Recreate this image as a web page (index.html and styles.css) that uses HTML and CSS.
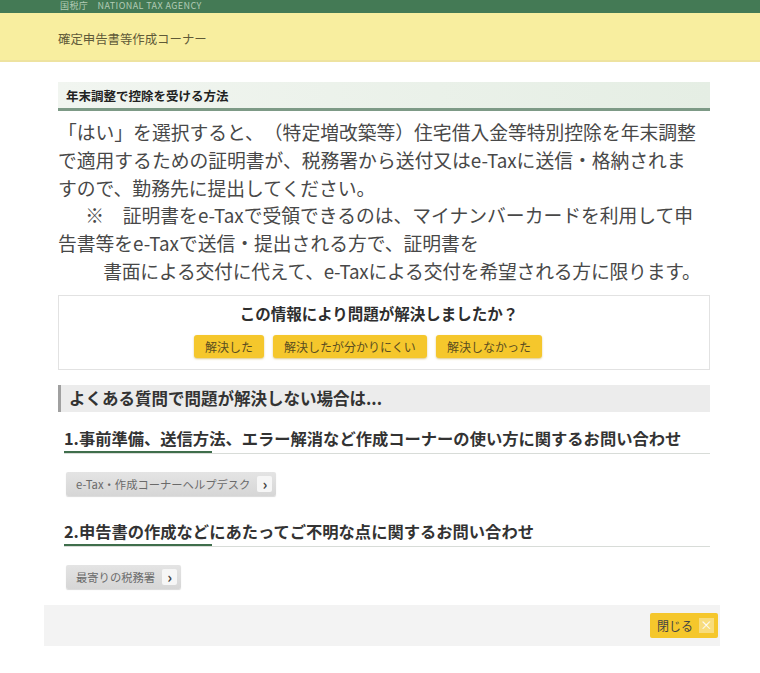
FILE: index.html
```html
<!DOCTYPE html>
<html lang="ja">
<head>
    <meta charset="UTF-8">
    <meta name="viewport" content="width=device-width, initial-scale=1.0">
    <title>確定申告書等作成コーナー</title>
    <link rel="stylesheet" href="styles.css">
</head>
<body>
    <div class="agency-bar">国税庁　NATIONAL TAX AGENCY</div>
    <header class="site-header">確定申告書等作成コーナー</header>

    <div class="modal">
        <div class="modal-body">
            <h2 class="section-title">年末調整で控除を受ける方法</h2>
            <p class="lead">「はい」を選択すると、（特定増改築等）住宅借入金等特別控除を年末調整で適用するための証明書が、税務署から送付又はe-Taxに送信・格納されますので、勤務先に提出してください。<br>　&nbsp;&nbsp;※　証明書をe-Taxで受領できるのは、マイナンバーカードを利用して申告書等をe-Taxで送信・提出される方で、証明書を<br><span class="last-line">　　&nbsp;&nbsp;書面による交付に代えて、e-Taxによる交付を希望される方に限ります。</span></p>

            <div class="feedback">
                <div class="feedback-title">この情報により問題が解決しましたか？</div>
                <div class="feedback-buttons">
                    <button class="btn-yellow">解決した</button>
                    <button class="btn-yellow">解決したが分かりにくい</button>
                    <button class="btn-yellow">解決しなかった</button>
                </div>
            </div>

            <h2 class="faq-title">よくある質問で問題が解決しない場合は...</h2>

            <h3 class="contact-title">1.事前準備、送信方法、エラー解消など作成コーナーの使い方に関するお問い合わせ</h3>
            <button class="btn-link">e-Tax・作成コーナーヘルプデスク<span class="chev">&#x203A;</span></button>

            <h3 class="contact-title">2.申告書の作成などにあたってご不明な点に関するお問い合わせ</h3>
            <button class="btn-link">最寄りの税務署<span class="chev">&#x203A;</span></button>
        </div>

        <div class="modal-footer">
            <button class="btn-close">閉じる<span class="x">×</span></button>
        </div>
    </div>
</body>
</html>
```

FILE: styles.css
```css
body {
    margin: 0;
    background: #fff;
    font-family: "Noto Sans CJK JP", "Noto Sans", sans-serif;
    color: #333;
}

.agency-bar {
    background-color: #447a55;
    color: #b3ccb6;
    font-size: 9px;
    height: 13px;
    line-height: 12px;
    padding-left: 60px;
    letter-spacing: 0.4px;
}

.site-header {
    background-color: #f8ee9f;
    border-bottom: 2px solid #eee3a0;
    height: 47px;
    line-height: 52px;
    padding-left: 58px;
    font-size: 12.4px;
    color: #5f5a38;
}

.modal {
    margin-left: 44px;
    width: 676px;
    margin-top: 20px;
}

.modal-body {
    padding: 0 10px 16px 14px;
}

.section-title {
    margin: 0;
    height: 26px;
    line-height: 27px;
    padding-left: 8px;
    font-size: 12.5px;
    font-weight: bold;
    color: #222;
    background: linear-gradient(to right, #f1f5f0, #e5eee4);
    border-bottom: 3px solid #7d9a86;
}

.lead {
    margin: 7px 0 10px;
    padding-right: 8px;
    font-size: 18.8px;
    line-height: 27.8px;
    color: #484848;
    text-spacing-trim: space-all;
}

.last-line {
    white-space: nowrap;
    letter-spacing: -0.2px;
}

.feedback {
    border: 1px solid #e2e2e2;
    padding: 4px 0 11px;
    text-align: center;
}

.feedback-title {
    font-size: 15.5px;
    font-weight: bold;
    color: #2e2e2e;
    line-height: 26px;
    padding-right: 10px;
}

.feedback-buttons {
    display: flex;
    justify-content: center;
    gap: 9px;
    margin-top: 9px;
    padding-right: 32px;
}

.btn-yellow {
    font-family: inherit;
    background-color: #f5c72c;
    border: none;
    border-radius: 3px;
    height: 23px;
    padding: 0 11px;
    font-size: 12px;
    color: #5a4d20;
    box-shadow: 0 1px 2px rgba(190, 150, 20, 0.5);
}

.faq-title {
    margin: 15px 0 0;
    height: 27px;
    line-height: 27px;
    padding-left: 8px;
    font-size: 16.5px;
    font-weight: bold;
    color: #333;
    background-color: #ececec;
    border-left: 3px solid #a0a0a0;
}

.contact-title {
    margin: 15px 0 0 6px;
    padding-bottom: 4px;
    font-size: 16.3px;
    font-weight: bold;
    color: #333;
    line-height: 22px;
    border-bottom: 1px solid #d8dcd8;
    background: linear-gradient(#3f6e4c, #3f6e4c) no-repeat left bottom / 148px 2px;
}

.btn-link {
    display: flex;
    align-items: center;
    margin: 18px 0 24px 8px;
    height: 24px;
    padding: 0 4px 0 10px;
    font-family: inherit;
    font-size: 11.3px;
    color: #6a6a6a;
    border: none;
    border-radius: 2px;
    background: linear-gradient(#e4e4e4, #d6d6d6);
    box-shadow: 0 1px 1px rgba(0, 0, 0, 0.15);
}

.btn-link:last-child {
    margin-bottom: 0;
}

.chev {
    display: inline-block;
    width: 15px;
    height: 16px;
    line-height: 15px;
    margin-left: 7px;
    background: #f6f6f6;
    color: #444;
    font-size: 15px;
    font-weight: bold;
    border-radius: 2px;
}

.modal-footer {
    background-color: #f3f3f3;
    height: 41px;
    display: flex;
    align-items: center;
    justify-content: flex-end;
    padding-right: 2px;
}

.btn-close {
    display: flex;
    align-items: center;
    height: 25px;
    padding: 0 4px 0 7px;
    font-family: inherit;
    font-size: 12px;
    color: #444;
    background-color: #f5c72c;
    border: none;
    border-radius: 2px;
}

.btn-close .x {
    display: inline-block;
    width: 15px;
    height: 15px;
    line-height: 14px;
    margin-left: 6px;
    background-color: #f8dc7c;
    color: #fff;
    font-size: 12px;
}
```
